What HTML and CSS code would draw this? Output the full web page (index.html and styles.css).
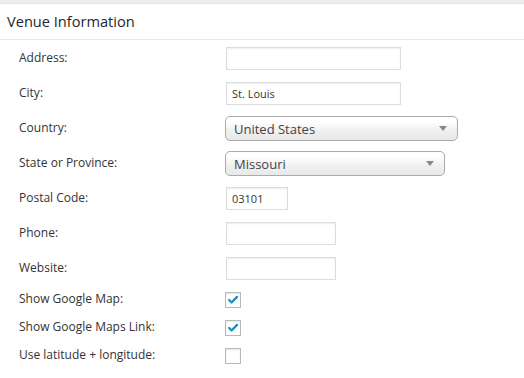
FILE: index.html
```html
<!DOCTYPE html>
<html lang="en">
<head>
    <meta charset="UTF-8">
    <title>Venue Information</title>
    <link rel="stylesheet" href="styles.css">
</head>
<body>
    <div class="box">
        <h3 class="box-title">Venue Information</h3>
        <div class="form">
            <label>Address:</label>
            <input type="text" class="wide" value="">

            <label>City:</label>
            <input type="text" class="wide" value="St. Louis">

            <label>Country:</label>
            <div class="select country"><span>United States</span><i class="arrow"></i></div>

            <label>State or Province:</label>
            <div class="select state"><span>Missouri</span><i class="arrow"></i></div>

            <label>Postal Code:</label>
            <input type="text" class="short" value="03101">

            <label>Phone:</label>
            <input type="text" class="medium" value="">

            <label>Website:</label>
            <input type="text" class="medium" value="">

            <label class="check-label">Show Google Map:</label>
            <span class="check"><svg viewBox="0 0 16 16" width="16" height="16"><path d="M3.6 8 L6.4 10.8 L12.6 4.4" fill="none" stroke="#1e8cbe" stroke-width="2.6" stroke-linecap="round" stroke-linejoin="round"/></svg></span>

            <label class="check-label">Show Google Maps Link:</label>
            <span class="check"><svg viewBox="0 0 16 16" width="16" height="16"><path d="M3.6 8 L6.4 10.8 L12.6 4.4" fill="none" stroke="#1e8cbe" stroke-width="2.6" stroke-linecap="round" stroke-linejoin="round"/></svg></span>

            <label class="check-label">Use latitude + longitude:</label>
            <span class="check"></span>
        </div>
    </div>
</body>
</html>
```

FILE: styles.css
```css
body {
    margin: 0;
    background: #fff;
    font-family: "Open Sans", Arial, sans-serif;
    color: #333;
}
.box {
    border-top: 3px solid #ececec;
}
.box-title {
    margin: 0;
    height: 35px;
    line-height: 35px;
    padding-left: 7px;
    font-size: 14.6px;
    font-weight: normal;
    color: #23282d;
    border-top: 1px solid #e2e2e2;
    border-bottom: 1px solid #e8e8e8;
}
.form {
    display: grid;
    grid-template-columns: 207px auto;
    grid-template-rows: repeat(7, 35px) repeat(3, 28px);
    align-items: center;
    padding: 1px 0 0 19px;
}
.form label {
    font-size: 12px;
    color: #333;
    margin-top: -2px;
}
.form input {
    box-sizing: border-box;
    height: 23px;
    border: 1px solid #ddd;
    box-shadow: inset 0 1px 2px rgba(0, 0, 0, 0.07);
    padding: 0 5px;
    font-family: inherit;
    font-size: 11px;
    color: #333;
}
.wide { width: 175px; }
.medium { width: 110px; }
.short { width: 62px; }
.select {
    box-sizing: border-box;
    height: 25px;
    border: 1px solid #aaa;
    border-radius: 5px;
    background: linear-gradient(#fff 20%, #f0f0f0 60%, #e8e8e8);
    display: flex;
    align-items: center;
    justify-content: space-between;
    padding: 0 10px 0 8px;
    font-size: 13px;
    color: #444;
    margin-left: -1px;
}
.country { width: 233px; }
.state { width: 220px; }
.arrow {
    width: 0;
    height: 0;
    border-left: 4px solid transparent;
    border-right: 4px solid transparent;
    border-top: 5px solid #888;
}
.form .check-label {
    margin-top: -4px;
}
.check {
    box-sizing: border-box;
    display: flex;
    width: 16px;
    height: 16px;
    border: 1px solid #b4b9be;
    background: #fff;
    box-shadow: inset 0 1px 2px rgba(0, 0, 0, 0.1);
    margin-left: -1px;
    align-items: center;
    justify-content: center;
}
.check svg {
    margin-top: -1px;
}
```
